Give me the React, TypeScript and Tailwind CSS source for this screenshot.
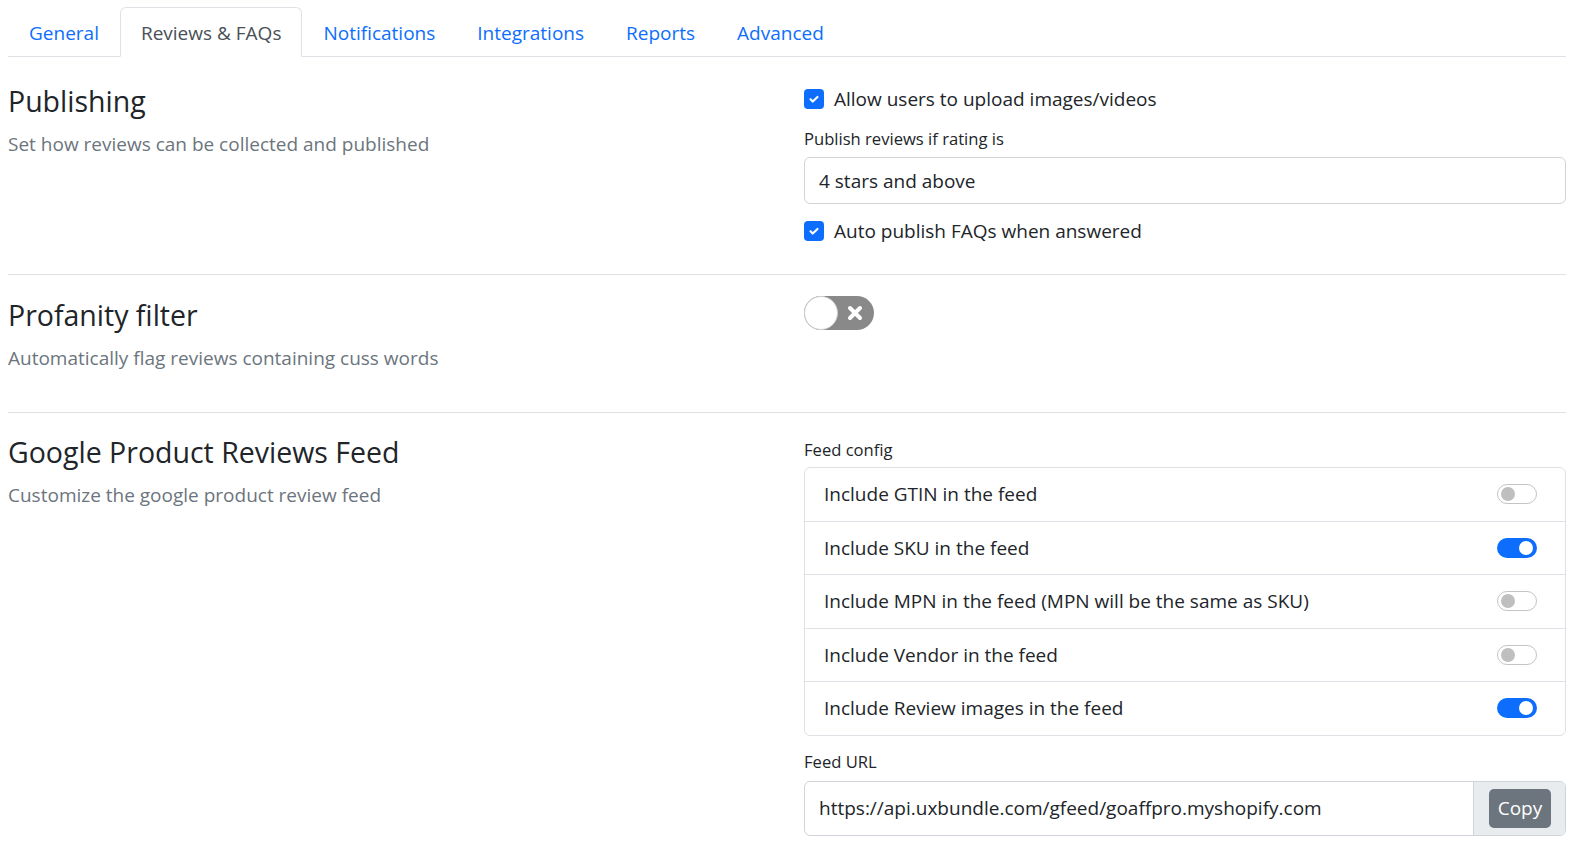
import { useState } from "react";

const tabs = ["General", "Reviews & FAQs", "Notifications", "Integrations", "Reports", "Advanced"];

const feedOptions = [
  { label: "Include GTIN in the feed", on: false },
  { label: "Include SKU in the feed", on: true },
  { label: "Include MPN in the feed (MPN will be the same as SKU)", on: false },
  { label: "Include Vendor in the feed", on: false },
  { label: "Include Review images in the feed", on: true },
];

function Checkbox({ label }: { label: string }) {
  return (
    <label className="flex items-center gap-[10px] h-[30px]">
      <span className="w-[20px] h-[20px] rounded-[4px] bg-[#0d6efd] flex items-center justify-center">
        <svg width="14" height="14" viewBox="0 0 20 20" fill="none">
          <path d="M5 10.5l3.2 3.2L15 7" stroke="#fff" strokeWidth="3" strokeLinecap="round" strokeLinejoin="round" />
        </svg>
      </span>
      <span>{label}</span>
    </label>
  );
}

function Switch({ on }: { on: boolean }) {
  return on ? (
    <span className="w-[40px] h-[20px] rounded-full bg-[#0d6efd] flex items-center justify-end pr-[4px]">
      <span className="w-[14px] h-[14px] rounded-full bg-white" />
    </span>
  ) : (
    <span className="w-[40px] h-[20px] rounded-full border border-[#c4c4c4] bg-white flex items-center pl-[3px]">
      <span className="w-[14px] h-[14px] rounded-full bg-[#bfbfbf]" />
    </span>
  );
}

function Section({
  title,
  subtitle,
  className,
  children,
}: {
  title: string;
  subtitle: string;
  className: string;
  children: React.ReactNode;
}) {
  return (
    <div className={`flex border-b border-[#dee2e6] ${className}`}>
      <div className="w-[796px] shrink-0">
        <h4 className="text-[28.5px] leading-[36px] text-[#212529] mb-[10px]">{title}</h4>
        <p className="text-[#6c757d] leading-[30px]">{subtitle}</p>
      </div>
      <div className="flex-1 min-w-0">{children}</div>
    </div>
  );
}

export default function App() {
  const [active] = useState("Reviews & FAQs");

  return (
    <div
      className="bg-white text-[#212529] text-[19px] leading-[30px] pl-[8px] pr-[6px] h-[841px] overflow-hidden"
      style={{ fontFamily: '"Open Sans", "Noto Sans", sans-serif' }}
    >
      {/* Tabs */}
      <div className="flex border-b border-[#dee2e6] mt-[7px]">
        {tabs.map((t) =>
          t === active ? (
            <div
              key={t}
              className="px-[20px] pt-[10px] pb-[7px] border border-[#dee2e6] border-b-white rounded-t-[6px] bg-white mb-[-1px] text-[#495057]"
            >
              {t}
            </div>
          ) : (
            <div key={t} className="px-[20px] pt-[10px] pb-[7px] border border-transparent text-[#0d6efd]">
              {t}
            </div>
          ),
        )}
      </div>

      {/* Publishing */}
      <Section title="Publishing" subtitle="Set how reviews can be collected and published" className="pt-[26px] pb-[28px]">
        <div className="pt-[1px]">
          <Checkbox label="Allow users to upload images/videos" />
          <div className="text-[16.6px] leading-[26px] mt-[12px] mb-[5px]">Publish reviews if rating is</div>
          <div className="h-[47px] border border-[#d0d4d9] rounded-[6px] px-[14px] flex items-center">
            4 stars and above
          </div>
          <div className="mt-[12px]">
            <Checkbox label="Auto publish FAQs when answered" />
          </div>
        </div>
      </Section>

      {/* Profanity filter */}
      <Section
        title="Profanity filter"
        subtitle="Automatically flag reviews containing cuss words"
        className="pt-[22px] pb-[39px]"
      >
        <div className="w-[70px] h-[34px] rounded-full bg-[#898989] flex items-center justify-between -mt-[1px]">
          <span className="w-[34px] h-[34px] rounded-full bg-white border border-[#cfcfcf]" />
          <svg width="20" height="20" viewBox="0 0 20 20" className="mr-[9px]">
            <path d="M5 5l10 10M15 5L5 15" stroke="#fff" strokeWidth="4" strokeLinecap="round" />
          </svg>
        </div>
      </Section>

      {/* Google feed */}
      <div className="flex pt-[21px]">
        <div className="w-[796px] shrink-0">
          <h4 className="text-[28.5px] leading-[36px] text-[#212529] mb-[10px]">Google Product Reviews Feed</h4>
          <p className="text-[#6c757d] leading-[30px]">Customize the google product review feed</p>
        </div>
        <div className="flex-1 min-w-0 pt-[3px]">
          <div className="text-[16.6px] leading-[26px] mb-[4px]">Feed config</div>
          <div className="border border-[#dee2e6] rounded-[6px]">
            {feedOptions.map((o, i) => (
              <div
                key={o.label}
                className={`flex items-center justify-between pl-[19px] pr-[28px] py-[11.25px] ${
                  i > 0 ? "border-t border-[#dee2e6]" : ""
                }`}
              >
                <span>{o.label}</span>
                <Switch on={o.on} />
              </div>
            ))}
          </div>
          <div className="text-[16.6px] leading-[26px] mt-[13px] mb-[6px]">Feed URL</div>
          <div className="flex h-[55px] border border-[#ced4da] rounded-[6px] overflow-hidden">
            <div className="flex-1 flex items-center pl-[14px]">https://api.uxbundle.com/gfeed/goaffpro.myshopify.com</div>
            <div className="w-[92px] bg-[#e9ecef] border-l border-[#ced4da] flex items-center pl-[15px]">
              <button className="bg-[#6c757d] text-white rounded-[5px] h-[39px] w-[62px]">Copy</button>
            </div>
          </div>
        </div>
      </div>
    </div>
  );
}
